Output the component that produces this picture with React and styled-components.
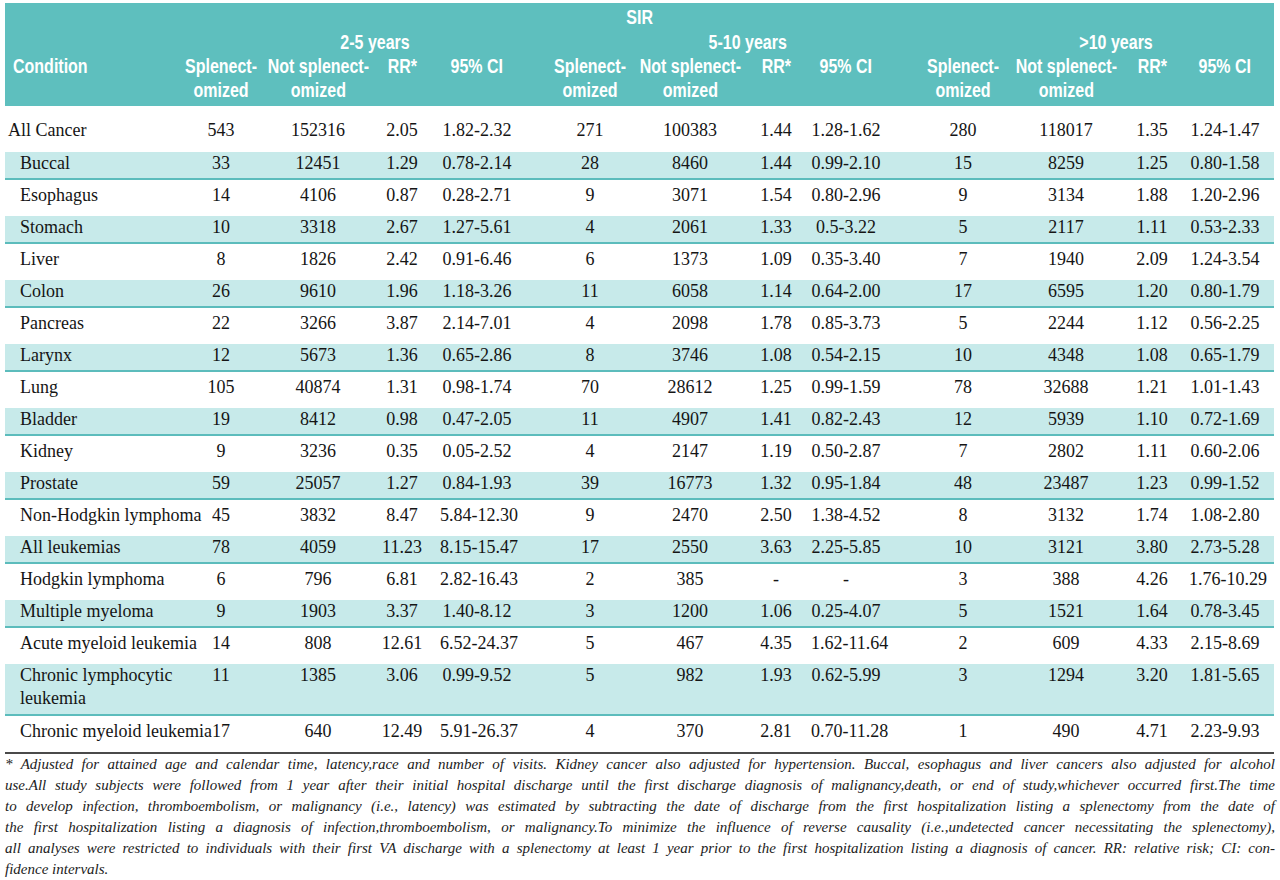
import React from "react";
import styled, { createGlobalStyle } from "styled-components";

const GlobalStyle = createGlobalStyle`
  html, body {
    margin: 0;
    padding: 0;
    background: #ffffff;
  }
`;

const Page = styled.div`
  width: 1280px;
  padding: 3px 6px 0 5px;
  box-sizing: border-box;
`;

const Table = styled.table`
  width: 1269px;
  table-layout: fixed;
  border-collapse: collapse;
  border-spacing: 0;
  font-family: "Liberation Serif", "Times New Roman", serif;
  font-size: 18px;
  color: #151515;
`;

const Col = styled.col`
  width: ${(p) => p.$w}px;
`;

const Head = styled.thead`
  background: #5ebfbe;
  color: #ffffff;
  font-family: "Liberation Sans", Arial, sans-serif;
  font-weight: 700;
  font-size: 20px;
`;

const HeadCell = styled.th`
  box-sizing: border-box;
  padding: ${(p) => p.$pt || 0}px ${(p) => p.$pr || 0}px ${(p) => p.$pb || 0}px
    ${(p) => p.$pl || 0}px;
  line-height: 24px;
  font-weight: 700;
  text-align: ${(p) => p.$align || "center"};
  vertical-align: top;
  white-space: nowrap;
`;

/* the printed header face is a condensed grotesque: squeeze Liberation Sans,
   negative margins give back the width the squeeze frees */
const Narrow = styled.span`
  display: inline-block;
  transform: scaleX(0.8);
  transform-origin: ${(p) => p.$origin || "center"} center;
  margin: ${(p) =>
    p.$origin === "left" ? "0 -40px 0 0" : p.$origin === "right" ? "0 0 0 -40px" : "0 -30px"};
`;

const Row = styled.tr`
  background: ${(p) => (p.$shaded ? "#c7eaea" : "#ffffff")};
  border-bottom: ${(p) => (p.$last ? "2px solid #4a4a4a" : p.$shaded ? "2px solid #5cbcbc" : "0")};
`;

const Cell = styled.td`
  box-sizing: border-box;
  padding: ${(p) => p.$pt}px ${(p) => p.$pr || 0}px ${(p) => p.$pb}px ${(p) => p.$pl || 0}px;
  line-height: 22px;
  text-align: center;
  vertical-align: top;
  white-space: nowrap;
`;

const NameCell = styled(Cell)`
  text-align: left;
  padding-left: ${(p) => (p.$indent ? 15 : 3)}px;
  line-height: ${(p) => (p.$tall ? 23 : 22)}px;
  overflow: visible;
`;

const Notes = styled.div`
  font-family: "Liberation Serif", "Times New Roman", serif;
  font-style: italic;
  font-size: 15px;
  line-height: 21px;
  color: #222;
  width: 1270px;
`;

const NoteLine = styled.div`
  white-space: nowrap;
  text-align: ${(p) => (p.$end ? "left" : "justify")};
  text-align-last: ${(p) => (p.$end ? "left" : "justify")};
`;

const cols = [
  { w: 167 },
  { w: 98 },
  { w: 90, pl: 6 },
  { w: 80, pl: 4 },
  { w: 93, pr: 19 },
  { w: 107, pl: 7 },
  { w: 93, pl: 7 },
  { w: 78, pl: 8 },
  { w: 94, pr: 24 },
  { w: 110, pl: 6 },
  { w: 94, pl: 8 },
  { w: 80, pl: 6 },
  { w: 85, pr: 13 },
];

const rows = [
  ["All Cancer", "543", "152316", "2.05", "1.82-2.32", "271", "100383", "1.44", "1.28-1.62", "280", "118017", "1.35", "1.24-1.47"],
  ["Buccal", "33", "12451", "1.29", "0.78-2.14", "28", "8460", "1.44", "0.99-2.10", "15", "8259", "1.25", "0.80-1.58"],
  ["Esophagus", "14", "4106", "0.87", "0.28-2.71", "9", "3071", "1.54", "0.80-2.96", "9", "3134", "1.88", "1.20-2.96"],
  ["Stomach", "10", "3318", "2.67", "1.27-5.61", "4", "2061", "1.33", "0.5-3.22", "5", "2117", "1.11", "0.53-2.33"],
  ["Liver", "8", "1826", "2.42", "0.91-6.46", "6", "1373", "1.09", "0.35-3.40", "7", "1940", "2.09", "1.24-3.54"],
  ["Colon", "26", "9610", "1.96", "1.18-3.26", "11", "6058", "1.14", "0.64-2.00", "17", "6595", "1.20", "0.80-1.79"],
  ["Pancreas", "22", "3266", "3.87", "2.14-7.01", "4", "2098", "1.78", "0.85-3.73", "5", "2244", "1.12", "0.56-2.25"],
  ["Larynx", "12", "5673", "1.36", "0.65-2.86", "8", "3746", "1.08", "0.54-2.15", "10", "4348", "1.08", "0.65-1.79"],
  ["Lung", "105", "40874", "1.31", "0.98-1.74", "70", "28612", "1.25", "0.99-1.59", "78", "32688", "1.21", "1.01-1.43"],
  ["Bladder", "19", "8412", "0.98", "0.47-2.05", "11", "4907", "1.41", "0.82-2.43", "12", "5939", "1.10", "0.72-1.69"],
  ["Kidney", "9", "3236", "0.35", "0.05-2.52", "4", "2147", "1.19", "0.50-2.87", "7", "2802", "1.11", "0.60-2.06"],
  ["Prostate", "59", "25057", "1.27", "0.84-1.93", "39", "16773", "1.32", "0.95-1.84", "48", "23487", "1.23", "0.99-1.52"],
  ["Non-Hodgkin lymphoma", "45", "3832", "8.47", "5.84-12.30", "9", "2470", "2.50", "1.38-4.52", "8", "3132", "1.74", "1.08-2.80"],
  ["All leukemias", "78", "4059", "11.23", "8.15-15.47", "17", "2550", "3.63", "2.25-5.85", "10", "3121", "3.80", "2.73-5.28"],
  ["Hodgkin lymphoma", "6", "796", "6.81", "2.82-16.43", "2", "385", "-", "-", "3", "388", "4.26", "1.76-10.29"],
  ["Multiple myeloma", "9", "1903", "3.37", "1.40-8.12", "3", "1200", "1.06", "0.25-4.07", "5", "1521", "1.64", "0.78-3.45"],
  ["Acute myeloid leukemia", "14", "808", "12.61", "6.52-24.37", "5", "467", "4.35", "1.62-11.64", "2", "609", "4.33", "2.15-8.69"],
  ["Chronic lymphocytic leukemia", "11", "1385", "3.06", "0.99-9.52", "5", "982", "1.93", "0.62-5.99", "3", "1294", "3.20", "1.81-5.65"],
  ["Chronic myeloid leukemia", "17", "640", "12.49", "5.91-26.37", "4", "370", "2.81", "0.70-11.28", "1", "490", "4.71", "2.23-9.93"],
];

const groups = [
  { label: "2-5 years", pr: 30 },
  { label: "5-10 years", pr: 24 },
  { label: ">10 years", pr: 36 },
];

const notes = [
  "* Adjusted for attained age and calendar time, latency,race and number of visits.  Kidney cancer also adjusted for hypertension. Buccal, esophagus and liver cancers also adjusted for alcohol",
  "use.All study subjects were followed from 1 year after their initial hospital discharge until the first discharge diagnosis of malignancy,death, or end of study,whichever occurred first.The time",
  "to develop infection, thromboembolism, or malignancy (i.e., latency) was estimated by subtracting the date of discharge from the first hospitalization listing a splenectomy from the date of",
  "the first hospitalization listing a diagnosis of infection,thromboembolism, or malignancy.To minimize the influence of reverse causality (i.e.,undetected cancer necessitating the splenectomy),",
  "all analyses were restricted to individuals with their first VA discharge with a splenectomy at least 1 year prior to the first hospitalization listing a diagnosis of cancer. RR: relative risk; CI: con-",
  "fidence intervals.",
];

const ColHeader = ({ c, children }) => (
  <HeadCell $pl={c.pl} $pr={c.pr} $pb={4}>
    <Narrow>{children}</Narrow>
  </HeadCell>
);

const DataRow = ({ row, index }) => {
  const first = index === 0;
  const shaded = index % 2 === 1;
  const last = index === rows.length - 1;
  const pt = first ? 13 : shaded ? 0 : 4;
  const pb = first ? 11 : shaded ? 4 : 10;
  const tall = row[0] === "Chronic lymphocytic leukemia";
  return (
    <Row $shaded={shaded} $last={last}>
      <NameCell $pt={pt} $pb={pb} $indent={!first} $tall={tall}>
        {tall ? (
          <>
            Chronic lymphocytic
            <br />
            leukemia
          </>
        ) : (
          row[0]
        )}
      </NameCell>
      {row.slice(1).map((v, i) => (
        <Cell key={i} $pt={pt} $pb={pb} $pl={cols[i + 1].pl} $pr={cols[i + 1].pr}>
          {v}
        </Cell>
      ))}
    </Row>
  );
};

export default function App() {
  return (
    <Page>
      <GlobalStyle />
      <Table>
        <colgroup>
          {cols.map((c, i) => (
            <Col key={i} $w={c.w} />
          ))}
        </colgroup>
        <Head>
          <tr>
            <HeadCell colSpan={13} $pt={2} $pb={1}>
              <Narrow>SIR</Narrow>
            </HeadCell>
          </tr>
          <tr>
            <HeadCell />
            {groups.map((g) => (
              <React.Fragment key={g.label}>
                <HeadCell colSpan={3} $align="right" $pr={g.pr}>
                  <Narrow $origin="right">{g.label}</Narrow>
                </HeadCell>
                <HeadCell />
              </React.Fragment>
            ))}
          </tr>
          <tr>
            <HeadCell $align="left" $pl={8} $pb={4}>
              <Narrow $origin="left">Condition</Narrow>
            </HeadCell>
            {groups.map((g, gi) => (
              <React.Fragment key={g.label}>
                <ColHeader c={cols[gi * 4 + 1]}>
                  Splenect-
                  <br />
                  omized
                </ColHeader>
                <ColHeader c={cols[gi * 4 + 2]}>
                  Not splenect-
                  <br />
                  omized
                </ColHeader>
                <ColHeader c={cols[gi * 4 + 3]}>RR*</ColHeader>
                <ColHeader c={cols[gi * 4 + 4]}>95% CI</ColHeader>
              </React.Fragment>
            ))}
          </tr>
        </Head>
        <tbody>
          {rows.map((r, i) => (
            <DataRow key={r[0]} row={r} index={i} />
          ))}
        </tbody>
      </Table>
      <Notes>
        {notes.map((n, i) => (
          <NoteLine key={i} $end={i === notes.length - 1}>
            {n}
          </NoteLine>
        ))}
      </Notes>
    </Page>
  );
}
